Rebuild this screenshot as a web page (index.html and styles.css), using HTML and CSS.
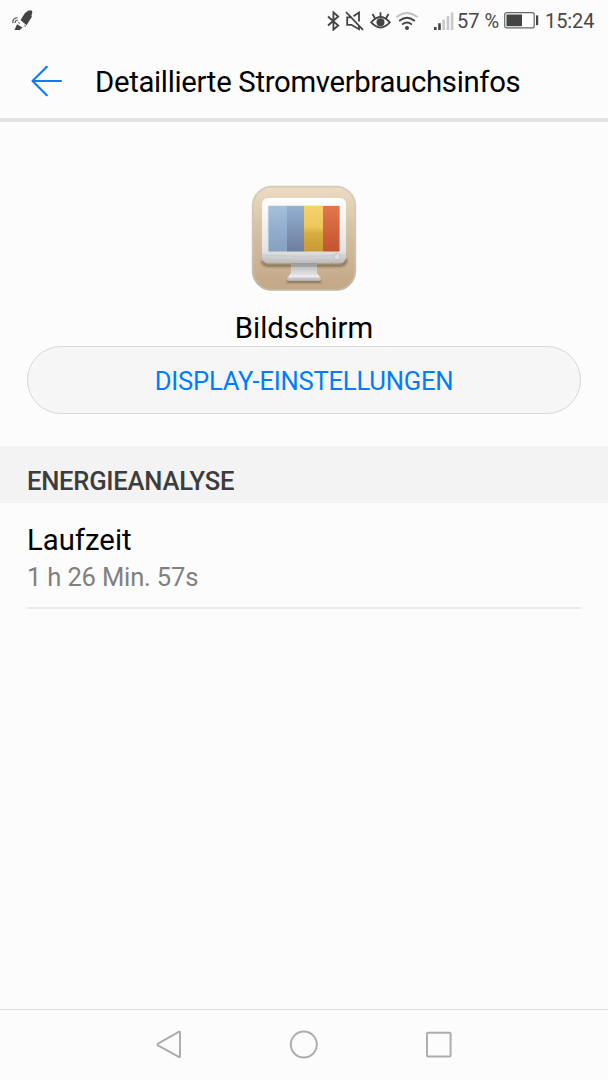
FILE: index.html
```html
<!DOCTYPE html>
<html lang="de">
<head>
<meta charset="utf-8">
<title>Detaillierte Stromverbrauchsinfos</title>
<link rel="stylesheet" href="styles.css">
</head>
<body>
<div class="screen">
  <div class="status">
    <svg class="notification" width="22" height="22" viewBox="0 0 22 22">
      <path d="M8.5 10 13 3 16.5.5 20 .6 20.3 3 19.5 5 19.8 7 14.5 15.2Z" fill="#444"/>
      <path d="M5 14.2 10.5 17.5 7.8 20H2.5Z" fill="#444"/>
      <path d="M7.4 12.2 13 15.8" stroke="#fcfcfc" stroke-width="2.4"/>
      <path d="M6.8 11.8 7.4 14.2M12.9 14.6 13.2 17" stroke="#666" stroke-width=".9" fill="none"/>
      <path d="M1 13Q0 8.5 5.5 7.5M3.3 13Q2.5 10.5 6 10" stroke="#555" stroke-width="1.2" fill="none"/>
    </svg>
    <div class="indicators">
      <svg width="13" height="20" viewBox="0 0 13 20" fill="none" stroke="#444" stroke-width="1.8"><path d="M1 5.5 11.2 14.5 6.4 18.7V1.3L11.2 5.5 1 14.5"/></svg>
      <svg class="mute" width="19" height="20" viewBox="0 0 19 20" fill="none" stroke="#444" stroke-width="1.8"><path d="M1 1 18 18.8M7 6.3H2.2V13.8H6.5L14 18.2V15.2M8.5 5.2 14 1.5V10.5"/></svg>
      <svg class="eye" width="21" height="20" viewBox="0 0 21 20" fill="none" stroke="#444" stroke-width="1.8"><path d="M1.2 11.4Q10.5 .6 19.8 11.4Q10.5 21.6 1.2 11.4ZM10.5 6V1.2M4.8 7 2.5 3M16.2 7 18.5 3"/><circle cx="10.5" cy="11.3" r="4" fill="#444" stroke="none"/></svg>
      <svg class="wifi" width="22" height="19" viewBox="0 0 22 19" fill="none" stroke-width="1.9" stroke-linecap="round"><path d="M1 4.8Q11-2.8 21 4.8" stroke="#c4c4c4"/><path d="M3.8 8.6Q11 2.8 18.2 8.6M6.8 12.1Q11 8.9 15.2 12.1" stroke="#444"/><circle cx="11" cy="16" r="2" fill="#444"/></svg>
      <svg class="signal" width="20" height="18" viewBox="0 0 20 18"><path d="M0 15H2.6V18H0ZM4.2 11.2H6.8V18H4.2Z" fill="#444"/><path d="M8.4 7.5H11V18H8.4ZM12.6 4H15.2V18H12.6ZM16.8.4H19.4V18H16.8Z" fill="#c8c8c8"/></svg>
      <span class="percent">57 %</span>
      <svg class="battery" width="35" height="17" viewBox="0 0 35 17"><rect x=".7" y=".7" width="29.5" height="15.2" rx="2" fill="none" stroke="#666" stroke-width="1.2"/><path d="M2.5 2.5H18V14.2H2.5Z" fill="#444"/><rect x="32" y="3.3" width="2.2" height="10" rx=".7" fill="#444"/></svg>
      <span class="clock">15:24</span>
    </div>
  </div>
  <header class="header">
    <svg class="back" width="32" height="32" viewBox="0 0 32 32" fill="none" stroke="#007dff" stroke-width="2.1" stroke-linecap="round" stroke-linejoin="round"><path d="M15.8 1.8 1.5 16 15.8 30.2M1.5 16H30"/></svg>
    <h1 class="title">Detaillierte Stromverbrauchsinfos</h1>
  </header>
  <main class="content">
    <section class="summary">
      <svg class="app-icon" width="108" height="108" viewBox="0 0 108 108">
        <defs>
          <linearGradient id="tan" x2="0" y2="1"><stop stop-color="#ecdcc3"/><stop offset=".5" stop-color="#d2bda0"/><stop offset="1" stop-color="#c2a785"/></linearGradient>
          <linearGradient id="edge" x2="0" y2="1"><stop stop-color="#d8cebd"/><stop offset="1" stop-color="#c4b7a2"/></linearGradient>
          <linearGradient id="case" x2="0" y2="1"><stop stop-color="#fff"/><stop offset=".82" stop-color="#e3e3e3"/><stop offset="1" stop-color="#bbb"/></linearGradient>
          <linearGradient id="stand" x2="0" y2="1"><stop stop-color="#aaa"/><stop offset=".4" stop-color="#d0d0d0"/><stop offset=".7" stop-color="#e6e6e6"/><stop offset="1" stop-color="#b0b0b0"/></linearGradient>
          <linearGradient id="blue" x2="0" y2="1"><stop stop-color="#a7bfdb"/><stop offset=".5" stop-color="#91adcf"/><stop offset="1" stop-color="#87a1bf"/></linearGradient>
          <linearGradient id="indigo" x2="0" y2="1"><stop stop-color="#94b0d0"/><stop offset="1" stop-color="#6d7da0"/></linearGradient>
          <linearGradient id="gold" x2="0" y2="1"><stop stop-color="#f6d26c"/><stop offset=".45" stop-color="#efc85e"/><stop offset=".6" stop-color="#d9ac40"/><stop offset="1" stop-color="#c89a34"/></linearGradient>
          <linearGradient id="orange" x2="0" y2="1"><stop stop-color="#e2774e"/><stop offset="1" stop-color="#c2542f"/></linearGradient>
          <filter id="shade"><feGaussianBlur stdDeviation="1.2"/></filter>
        </defs>
        <rect x="2.8" y="2.8" width="102.4" height="103" rx="19" fill="url(#tan)" stroke="url(#edge)" stroke-width="2"/>
        <path d="M12 77Q13 81 18 81.5H90Q96 81 96 75M37 97.5H71" fill="none" stroke="#69563f" stroke-opacity=".65" stroke-width="3" filter="url(#shade)"/>
        <path d="M41 79H67V89L70.5 93.5Q72 97 68 97H40Q36 97 37.5 93.5L41 89Z" fill="url(#stand)"/>
        <path d="M39 92.5H69" stroke="#eee" stroke-width="1.2"/>
        <path d="M41 79H67V83H41Z" fill="#898989" opacity=".5"/>
        <rect x="12" y="14" width="84" height="65" rx="6" fill="url(#case)"/>
        <path d="M12.5 71Q54 74 95.5 71" fill="none" stroke="#ccc" stroke-width="1"/>
        <path d="M17.8 21.5H90.2V68.5H17.8Z" fill="#d8dce0"/>
        <path d="M18.5 22H37.5V67.5H18.5Z" fill="url(#blue)"/>
        <path d="M37 22H54.5V67.5H37Z" fill="url(#indigo)"/>
        <path d="M54 22H73V67.5H54Z" fill="url(#gold)"/>
        <path d="M73 22H89.5V67.5H73Z" fill="url(#orange)"/>
        <circle cx="87" cy="72.5" r="3" fill="#ddd" stroke="#bbb" stroke-width=".8"/>
      </svg>
      <div class="app-name">Bildschirm</div>
      <button class="settings">DISPLAY-EINSTELLUNGEN</button>
    </section>
    <h2 class="section-title">ENERGIEANALYSE</h2>
    <div class="row">
      <div class="label">Laufzeit</div>
      <div class="value">1 h 26 Min. 57s</div>
    </div>
  </main>
  <nav class="navbar">
    <svg width="28" height="30" viewBox="0 0 28 30" fill="none" stroke="#adadad" stroke-width="2" stroke-linejoin="round"><path d="M23.8 1.9Q25 1.3 25 2.5V26.3Q25 27.5 23.8 26.8L3 15.3Q1.8 14.5 3 13.7Z"/></svg>
    <svg width="30" height="30" viewBox="0 0 30 30" fill="none" stroke="#adadad" stroke-width="2"><circle cx="14.8" cy="14.6" r="13"/></svg>
    <svg width="28" height="30" viewBox="0 0 28 30" fill="none" stroke="#adadad" stroke-width="2"><rect x="2" y="2.8" width="23.6" height="23.6" rx="1"/></svg>
  </nav>
</div>
</body>
</html>
```
FILE: styles.css
```css
* { box-sizing: border-box; }
body { margin: 0; background: #fcfcfc; font-family: Roboto, "Liberation Sans", sans-serif; }
svg { display: block; flex: none; }
.screen { width: 608px; height: 1080px; display: flex; flex-direction: column; overflow: hidden; }
.status { height: 42px; flex: none; display: flex; align-items: flex-start; justify-content: space-between; padding: 10px 13px 0 12px; color: #484848; }
.indicators { display: flex; height: 22px; align-items: center; font-size: 20px; line-height: 22px; white-space: nowrap; }
.mute { margin-left: 5px; }
.eye { margin-left: 6px; }
.wifi { margin-left: 5px; }
.signal { margin-left: 16px; }
.percent { width: 43px; margin-left: 3px; margin-top: -1px; letter-spacing: 0; }
.battery { margin-left: 4px; margin-top: -2px; }
.clock { width: 50px; margin-left: 6px; letter-spacing: -.1px; }
.header { height: 80px; flex: none; display: flex; align-items: center; padding-left: 31px; border-bottom: 4px solid #e3e3e3; }
.back { margin-top: 2px; }
.title { margin: 3px 0 0 32px; font-size: 29.3px; line-height: 36px; font-weight: 400; letter-spacing: -.31px; white-space: nowrap; color: #000; }
.content { flex: 1; }
.summary { display: flex; flex-direction: column; align-items: center; padding: 62px 27px 32px; }
.app-name { margin-top: 18px; height: 36px; font-size: 29.3px; line-height: 36px; color: #000; }
.settings { width: 554px; height: 68px; border: 1px solid #d9d9d9; border-radius: 34px; background: #f6f6f6; padding: 2px 0 0; font: 400 25.6px/32px Roboto, "Liberation Sans", sans-serif; letter-spacing: -.22px; color: #007dff; }
.section-title { margin: 0; height: 57px; padding: 19px 27px 0; background: #f3f3f3; font-size: 25.6px; line-height: 32px; font-weight: 500; letter-spacing: -.25px; color: #3c3c3c; }
.row { margin: 0 27px; height: 106px; padding-top: 19px; border-bottom: 2px solid #ebebeb; }
.label { font-size: 29.3px; line-height: 36px; color: #000; }
.value { font-size: 25.6px; line-height: 32px; margin-top: 3px; letter-spacing: -.19px; color: #808080; }
.navbar { height: 71px; flex: none; display: flex; justify-content: center; align-items: center; gap: 106px; border-top: 1px solid #e0e0e0; }
```
